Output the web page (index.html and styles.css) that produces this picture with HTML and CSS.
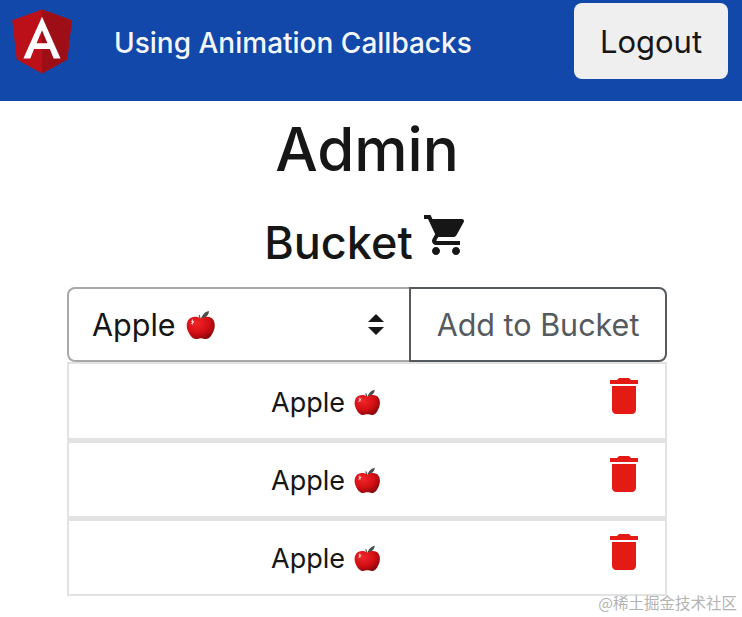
FILE: index.html
```html
<!DOCTYPE html>
<html lang="en">
<head>
<meta charset="utf-8">
<title>Using Animation Callbacks</title>
<link rel="stylesheet" href="styles.css">
</head>
<body>
<svg class="defs" width="0" height="0" aria-hidden="true">
  <defs>
    <radialGradient id="appleRed" cx="35%" cy="30%" r="80%">
      <stop offset="0" stop-color="#f0252a"/>
      <stop offset="0.55" stop-color="#d30f14"/>
      <stop offset="1" stop-color="#7c0508"/>
    </radialGradient>
    <symbol id="apple" viewBox="0 0 30 32">
      <path d="M15 10c2-3 3-6 8-7 0 3-2 6-7 8z" fill="#47504c"/>
      <path d="M14 11c0-2-.3-3-1-4" stroke="#47504c" stroke-width="1.2" fill="none"/>
      <path d="M15 10.500c3-2 7-2.500 10.500-.5 3.500 2.500 4 8 2.500 12-1.500 4-4 9-8 9-2 0-3-.8-5-.8s-3 .8-5 .8c-4 0-7-5-8.500-9-1.500-4-1-9.500 3-12 3.500-2 7.500-1.500 10.500.5z" fill="url(#appleRed)"/>
      <path d="M5 13l3 1.500M6.500 11.500v5M4.800 16l3.400-3" stroke="#f6d8d4" stroke-width=".9"/>
    </symbol>
    <symbol id="trash" viewBox="0 0 24 24">
      <path d="M6 19c0 1.100.9 2 2 2h8c1.100 0 2-.9 2-2V7H6v12zM19 4h-3.500l-1-1h-5l-1 1H5v2h14V4z"/>
    </symbol>
  </defs>
</svg>

<nav class="navbar">
  <svg class="logo" viewBox="0 0 250 250" role="img" aria-label="Angular">
    <polygon fill="#bb101a" points="125,30 31.900,63.200 46.100,186.300 125,230 203.900,186.300 218.100,63.200"/>
    <polygon fill="#9e0e16" points="125,30 125,230 203.900,186.300 218.100,63.200"/>
    <path fill="#fff" d="M125 52.100 66.800 182.600h21.700l11.700-29.200h49.400l11.700 29.200h21.700L125 52.100zM142 135.400h-34l17-40.900 17 40.900z"/>
  </svg>
  <span class="brand-title">Using Animation Callbacks</span>
  <button class="logout" type="button">Logout</button>
</nav>

<main class="content">
  <h1 class="page-title">Admin</h1>
  <h2 class="bucket-title">Bucket
    <svg class="cart" viewBox="0 0 24 24" aria-hidden="true"><path d="M7 18c-1.100 0-1.990.9-1.990 2S5.900 22 7 22s2-.9 2-2-.9-2-2-2zM1 2v2h2l3.600 7.590-1.350 2.450c-.16.28-.25.61-.25.96 0 1.100.9 2 2 2h12v-2H7.420c-.14 0-.25-.11-.25-.25l.03-.12.9-1.630h7.450c.75 0 1.410-.41 1.750-1.030l3.580-6.490c.08-.14.12-.31.12-.48 0-.55-.45-1-1-1H5.210l-.94-2H1zm16 16c-1.100 0-1.990.9-1.990 2s.89 2 1.990 2 2-.9 2-2-.9-2-2-2z"/></svg>
  </h2>

  <div class="input-group">
    <div class="select">
      <span class="select-label">Apple <svg class="apple apple-lg"><use href="#apple"/></svg></span>
      <svg class="select-arrows" viewBox="0 0 16 21" aria-hidden="true"><path d="M8 0l8 8H0zM0 13h16l-8 8z"/></svg>
    </div>
    <button class="add-btn" type="button">Add to Bucket</button>
  </div>

  <ul class="bucket-list">
    <li class="bucket-item">
      <span class="item-name">Apple <svg class="apple apple-sm"><use href="#apple"/></svg></span>
      <span class="item-action"><svg class="trash"><use href="#trash"/></svg></span>
    </li>
    <li class="bucket-item">
      <span class="item-name">Apple <svg class="apple apple-sm"><use href="#apple"/></svg></span>
      <span class="item-action"><svg class="trash"><use href="#trash"/></svg></span>
    </li>
    <li class="bucket-item">
      <span class="item-name">Apple <svg class="apple apple-sm"><use href="#apple"/></svg></span>
      <span class="item-action"><svg class="trash"><use href="#trash"/></svg></span>
    </li>
  </ul>
</main>

<div class="watermark">@稀土掘金技术社区</div>
</body>
</html>
```

FILE: styles.css
```css
* { box-sizing: border-box; }

html, body {
  margin: 0;
  padding: 0;
}

body {
  position: relative;
  height: 617px;
  overflow: hidden;
  background: #fff;
  color: #161616;
  font-family: Inter, "Liberation Sans", "Noto Sans CJK SC", sans-serif;
}

.defs { position: absolute; }

.navbar {
  display: flex;
  align-items: flex-start;
  height: 101px;
  padding: 0 14px 0 2px;
  background: #1248a9;
}

.logo {
  width: 80px;
  height: 80px;
  flex: none;
}

.brand-title {
  margin: 25px 0 0 32px;
  color: #f4f7fc;
  font-size: 28px;
  line-height: 36px;
  font-weight: 500;
  white-space: nowrap;
}

.logout {
  margin: 3px 0 0 auto;
  width: 154px;
  height: 76px;
  border: 0;
  border-radius: 8px;
  background: #efefef;
  color: #161616;
  font: inherit;
  font-size: 31px;
}

.content {
  display: flex;
  flex-direction: column;
  align-items: center;
  padding-right: 8px;
}

.page-title {
  margin: 12px 0 0;
  font-size: 60px;
  line-height: 72px;
  font-weight: 500;
}

.bucket-title {
  display: flex;
  align-items: flex-start;
  gap: 9px;
  margin: 33px 0 0;
  height: 69px;
  font-size: 45px;
  line-height: 50px;
  font-weight: 500;
}

.cart {
  width: 48px;
  height: 48px;
  margin-top: -7px;
  fill: #161616;
}

.input-group {
  display: flex;
  width: 600px;
  height: 75px;
}

.select {
  display: flex;
  align-items: center;
  justify-content: space-between;
  width: 342px;
  padding: 0 25px 0 23px;
  border: 2px solid #a9a9a9;
  border-right: 0;
  border-radius: 8px 0 0 8px;
  font-size: 30.500px;
}

.select-label {
  display: flex;
  align-items: center;
  gap: 10px;
}

.select-arrows {
  width: 16px;
  height: 21px;
  fill: #161616;
}

.add-btn {
  flex: 1;
  padding: 0;
  border: 2px solid #555a5e;
  border-radius: 0 8px 8px 0;
  background: #fff;
  color: #555a5e;
  font: inherit;
  font-size: 30.500px;
}

.apple { flex: none; }
.apple-lg { width: 30px; height: 32px; margin-top: -2px; }
.apple-sm { width: 27px; height: 29px; margin-top: -2px; }

.bucket-list {
  width: 600px;
  margin: 0;
  padding: 0;
  list-style: none;
}

.bucket-item {
  display: flex;
  align-items: flex-start;
  height: 78px;
  border: 2px solid #e2e2e2;
}

.bucket-item + .bucket-item { border-top-width: 3px; }

.item-name {
  flex: 1;
  display: flex;
  align-items: center;
  justify-content: center;
  gap: 9px;
  height: 76px;
  font-size: 27px;
}

.bucket-item + .bucket-item .item-name { height: 74px; }

.item-action {
  width: 82px;
  padding: 8px 0 0 17px;
}

.bucket-item + .bucket-item .item-action { padding-top: 7px; }

.trash {
  display: block;
  width: 48px;
  height: 48px;
  fill: #e31b14;
}

.watermark {
  position: absolute;
  right: 5px;
  top: 591px;
  color: #b4b4b4;
  font-family: "Noto Sans CJK SC", sans-serif;
  font-size: 15.500px;
  line-height: 22px;
  white-space: nowrap;
}
```
